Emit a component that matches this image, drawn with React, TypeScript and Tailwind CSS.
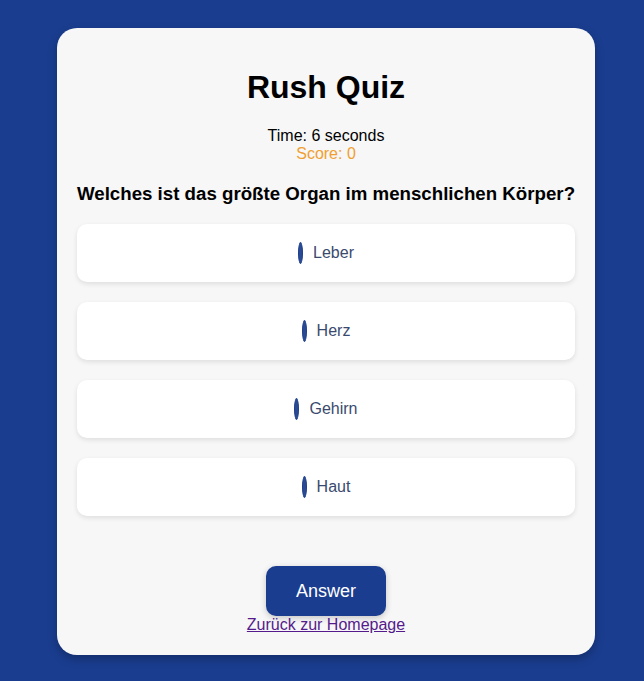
import React, { useState } from 'react';

const options = ['Leber', 'Herz', 'Gehirn', 'Haut'];

const App: React.FC = () => {
  const [picked, setPicked] = useState<string | null>(null);

  return (
    <div className="min-h-screen bg-[#1a3d8f] flex justify-center pt-[28px] font-['Liberation_Sans',Arial,sans-serif]">
      <div className="ml-[8px] w-[538px] h-[627px] bg-[#f7f7f7] rounded-[20px] shadow-[0_4px_10px_rgba(0,0,0,0.25)] px-5 pt-5 pb-5 flex flex-col items-center text-center">
        <h1 className="text-[32px] leading-[37px] font-bold text-black mt-[21px] mb-[21px]">Rush Quiz</h1>
        <p className="text-base leading-[18px] text-black">Time: 6 seconds</p>
        <p className="text-base leading-[18px] text-[#f0a030]">Score: 0</p>
        <h2 className="text-[18.7px] leading-[21px] font-bold text-black mt-5 mb-5 whitespace-nowrap">
          Welches ist das größte Organ im menschlichen Körper?
        </h2>
        <div className="w-full flex flex-col gap-5">
          {options.map((o) => (
            <label
              key={o}
              className="h-[58px] w-full bg-white rounded-[10px] shadow-[0_2px_5px_rgba(0,0,0,0.1)] flex items-center justify-center gap-[10px] text-base text-[#3a4a6e] cursor-pointer"
              onClick={() => setPicked(o)}
            >
              <span className={`w-[5px] h-[22px] rounded-[50%] border-[1.5px] border-[#1e3f8a] ${picked === o ? 'bg-[#1e3f8a]' : 'bg-[#2a4a94]'}`}></span>
              <span>{o}</span>
            </label>
          ))}
        </div>
        <button className="mt-[50px] w-[120px] h-[50px] bg-[#1a3d8f] text-white text-lg rounded-[10px] shadow-[0_2px_6px_rgba(0,0,0,0.2)]">
          Answer
        </button>
        <a href="#" className="text-base leading-[18px] text-[#551a8b] underline">Zurück zur Homepage</a>
      </div>
    </div>
  );
};

export default App;
